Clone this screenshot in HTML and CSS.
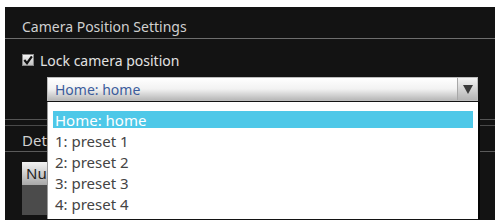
FILE: index.html
```html
<!DOCTYPE html>
<html lang="en">
<head>
    <meta charset="UTF-8">
    <title>Camera Position Settings</title>
    <link rel="stylesheet" href="styles.css">
</head>
<body>
    <div class="panel">
        <!-- Camera position section -->
        <div class="section">
            <div class="section-title">Camera Position Settings</div>
            <div class="section-body">
                <label class="check-row">
                    <span class="checkbox">
                        <svg width="10" height="10" viewBox="0 0 10 10"><path d="M1.3 5 L4 8.2 L8.9 1.3" fill="none" stroke="#111" stroke-width="2.2"/></svg>
                    </span>
                    Lock camera position
                </label>
                <div class="select-wrap">
                    <div class="select">
                        <span class="select-value">Home: home</span>
                        <span class="select-arrow"></span>
                    </div>
                    <ul class="dropdown">
                        <li class="active"><span>Home: home</span></li>
                        <li><span>1: preset 1</span></li>
                        <li><span>2: preset 2</span></li>
                        <li><span>3: preset 3</span></li>
                        <li><span>4: preset 4</span></li>
                    </ul>
                </div>
            </div>
        </div>

        <!-- Details section (behind the list) -->
        <div class="section section-next">
            <div class="section-title">Det</div>
            <div class="tabs">
                <div class="tab">Nu</div>
                <div class="tab-column"></div>
            </div>
        </div>
    </div>
</body>
</html>
```

FILE: styles.css
```css
* {
    margin: 0;
    padding: 0;
    box-sizing: border-box;
}

body {
    background: #fff;
    font-family: "Noto Sans", "Open Sans", sans-serif;
    height: 220px;
    overflow: hidden;
    padding: 7px 0 0 5px;
}

.panel {
    background: #131313;
    height: 213px;
    overflow: hidden;
    color: #d8d8d8;
}

.section-title {
    height: 32px;
    padding: 9px 0 0 17px;
    font-size: 14px;
    line-height: 22px;
    color: #d0d0d0;
    border-bottom: 1px solid #6e6e6e;
}

.section-body {
    padding: 10px 0 0 17px;
    height: 81px;
    border-bottom: 1px solid #555;
}

.check-row {
    display: flex;
    align-items: center;
    gap: 6px;
    font-size: 14px;
    color: #e2e2e2;
    height: 22px;
}

.checkbox {
    width: 12px;
    height: 12px;
    background: linear-gradient(#f4f4f4, #c0c0c0);
    border: 1px solid #888;
    display: flex;
    align-items: center;
    justify-content: center;
}

.select-wrap {
    position: relative;
    margin: 6px 0 0 25px;
    width: 431px;
}

.select {
    height: 24px;
    display: flex;
    align-items: center;
    background: linear-gradient(#ffffff 0%, #f2f2f2 50%, #b8b8b8 100%);
    border: 1px solid #bdbdbd;
}

.select-value {
    flex: 1;
    padding-left: 7px;
    font-size: 14px;
    color: #3b5c9c;
}

.select-arrow {
    width: 20px;
    height: 100%;
    border-left: 1px solid #a8a8a8;
    position: relative;
    background: linear-gradient(#f4f4f4, #b4b4b4);
}

.select-arrow::after {
    content: "";
    position: absolute;
    left: 5px;
    top: 7px;
    border-left: 5px solid transparent;
    border-right: 5px solid transparent;
    border-top: 9px solid #3a3a3a;
}

.dropdown {
    position: absolute;
    top: 25px;
    left: 0;
    width: 431px;
    height: 117px;
    list-style: none;
    background: #fff;
    border-left: 1px solid #9a9a9a;
    padding: 7px 5px 0 5px;
    box-shadow: 2px 0 0 #050505;
    z-index: 2;
}

.dropdown li {
    height: 21px;
    display: flex;
    align-items: center;
    padding-left: 2px;
    font-size: 15px;
    color: #444;
}

.dropdown li.active {
    background: #4ec8e8;
    background-clip: content-box;
    padding: 2px 0;
    color: #fff;
}

.dropdown li.active span {
    padding-left: 2px;
}

.section-next {
    margin-top: 5px;
    border-top: 1px solid #4a4a4a;
}

.section-next .section-title {
    height: 26px;
    padding-top: 3px;
    line-height: 22px;
    font-size: 15px;
    border-bottom-color: #5a5a5a;
}

.tabs {
    padding: 10px 0 0 17px;
}

.tab {
    width: 40px;
    height: 23px;
    background: linear-gradient(#f2f2f2, #a9a9a9);
    color: #222;
    font-size: 15px;
    padding-left: 4px;
    line-height: 23px;
    overflow: hidden;
}

.tab-column {
    width: 40px;
    height: 30px;
    background: #4b4b4b;
}
```
